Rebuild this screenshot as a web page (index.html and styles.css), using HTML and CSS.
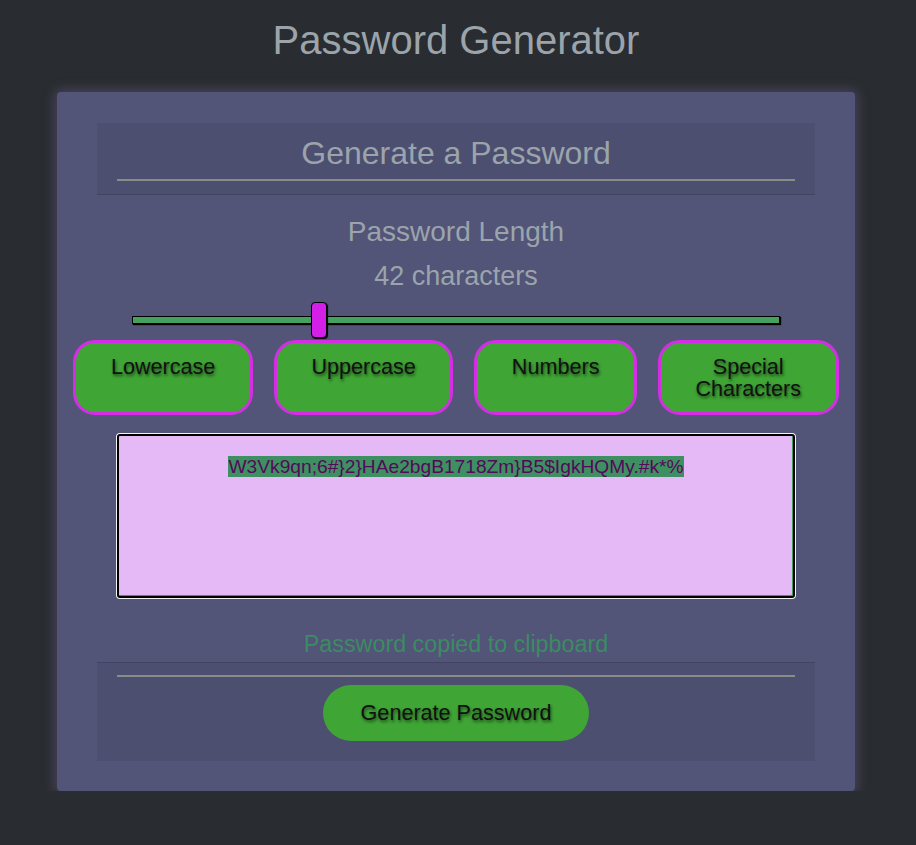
FILE: index.html
```html
<!DOCTYPE html>
<html lang="en">
<head>
<meta charset="utf-8">
<title>Password Generator</title>
<link rel="stylesheet" href="styles.css">
</head>
<body>
<div class="page">
  <h1 class="title">Password Generator</h1>
  <div class="card">
    <div class="card-header">
      <h2 class="card-title">Generate a Password</h2>
      <hr class="rule">
    </div>
    <div class="card-body">
      <h3 class="length-label">Password Length</h3>
      <p class="length-value">42 characters</p>
      <input class="range" type="range" min="8" max="128" value="42">
      <div class="options">
        <button class="option">Lowercase</button>
        <button class="option">Uppercase</button>
        <button class="option">Numbers</button>
        <button class="option">Special Characters</button>
      </div>
      <div class="output"><span class="sel">W3Vk9qn;6#}2}HAe2bgB1718Zm}B5$IgkHQMy.#k*%</span></div>
      <p class="copied">Password copied to clipboard</p>
    </div>
    <div class="card-footer">
      <hr class="rule">
      <button class="generate">Generate Password</button>
    </div>
  </div>
</div>
</body>
</html>
```

FILE: styles.css
```css
* { box-sizing: border-box; }

html, body {
  margin: 0;
  padding: 0;
  background: #292c30;
  font-family: "Liberation Sans", Arial, sans-serif;
  color: #9ba4ab;
}

.page {
  width: 912px;
  padding-top: 16px;
}

.title {
  margin: 0 0 28px;
  font-size: 40px;
  line-height: 48px;
  font-weight: normal;
  text-align: center;
  color: #9ba4ab;
}

.card {
  width: 798px;
  margin: 0 auto;
  padding: 31px 40px 30px;
  background: #525478;
  border-radius: 4px;
  box-shadow: 0 0 12px 3px rgba(125, 105, 170, 0.35);
}

.card-header {
  padding: 11px 20px 0;
  background: rgba(0, 0, 0, 0.05);
  border-bottom: 1px solid rgba(0, 0, 0, 0.14);
  text-align: center;
}

.card-title {
  margin: 0;
  font-size: 32px;
  line-height: 38px;
  font-weight: normal;
  color: #9ba4ab;
}

.rule {
  margin: 0;
  height: 2px;
  border: 0;
  background: #8b8b87;
}

.card-header .rule {
  margin: 7px 0 13px;
}

.card-body {
  text-align: center;
  padding-top: 21px;
}

.length-label {
  margin: 0;
  font-size: 28px;
  line-height: 32px;
  font-weight: normal;
}

.length-value {
  margin: 12px 0 0;
  font-size: 27px;
  line-height: 32px;
}

.range {
  -webkit-appearance: none;
  appearance: none;
  display: block;
  width: 648px;
  height: 36px;
  margin: 10px auto 0;
  padding: 0;
  background: transparent;
}

.range::-webkit-slider-runnable-track {
  height: 8px;
  background: #46a05f;
  border: 1px solid #000;
  box-shadow: 1px 1px 1px #000;
}

.range::-webkit-slider-thumb {
  -webkit-appearance: none;
  box-sizing: border-box;
  width: 16px;
  height: 36px;
  margin-top: -15px;
  background: #d41fe8;
  border: 1px solid #000;
  border-radius: 4px;
  box-shadow: 1px 1px 1px #000;
}

.options {
  display: flex;
  justify-content: center;
  gap: 21px;
  margin-top: 2px;
  height: 75px;
}

.option {
  padding: 13px 34.5px 12px;
  background: #3fa535;
  border: 3px solid #d52ce6;
  border-radius: 22px;
  font-family: "Liberation Sans", Arial, sans-serif;
  font-size: 21.6px;
  line-height: 22px;
  color: #111;
  text-shadow: 1px 2px 3px rgba(0, 0, 0, 0.55);
  display: flex;
  align-items: flex-start;
  justify-content: center;
  text-align: center;
}

.output {
  margin: 19px 20px 0;
  height: 164px;
  padding: 20px 10px;
  background: #e5b9f6;
  border: 2px solid #000;
  border-radius: 3px;
  box-shadow: 0 0 0 1px #f4f4f4, inset -1px -1px 0 #3c9a5c;
  font-size: 19.2px;
  line-height: 21px;
  color: #55095a;
  text-align: center;
}

.sel {
  background: #3e9062;
}

.copied {
  margin: 32.5px 0 4.5px;
  font-size: 23.3px;
  line-height: 27px;
  color: #3c8b64;
}

.card-footer {
  padding: 12px 20px 20px;
  background: rgba(0, 0, 0, 0.05);
  border-top: 1px solid rgba(0, 0, 0, 0.14);
  text-align: center;
}

.card-footer .rule {
  margin: 0 0 8px;
}

.generate {
  height: 56px;
  padding: 0 38px;
  background: #3fa535;
  border: 0;
  border-radius: 28px;
  font-family: "Liberation Sans", Arial, sans-serif;
  font-size: 21.6px;
  color: #111;
  text-shadow: 1px 2px 3px rgba(0, 0, 0, 0.55);
}
```
